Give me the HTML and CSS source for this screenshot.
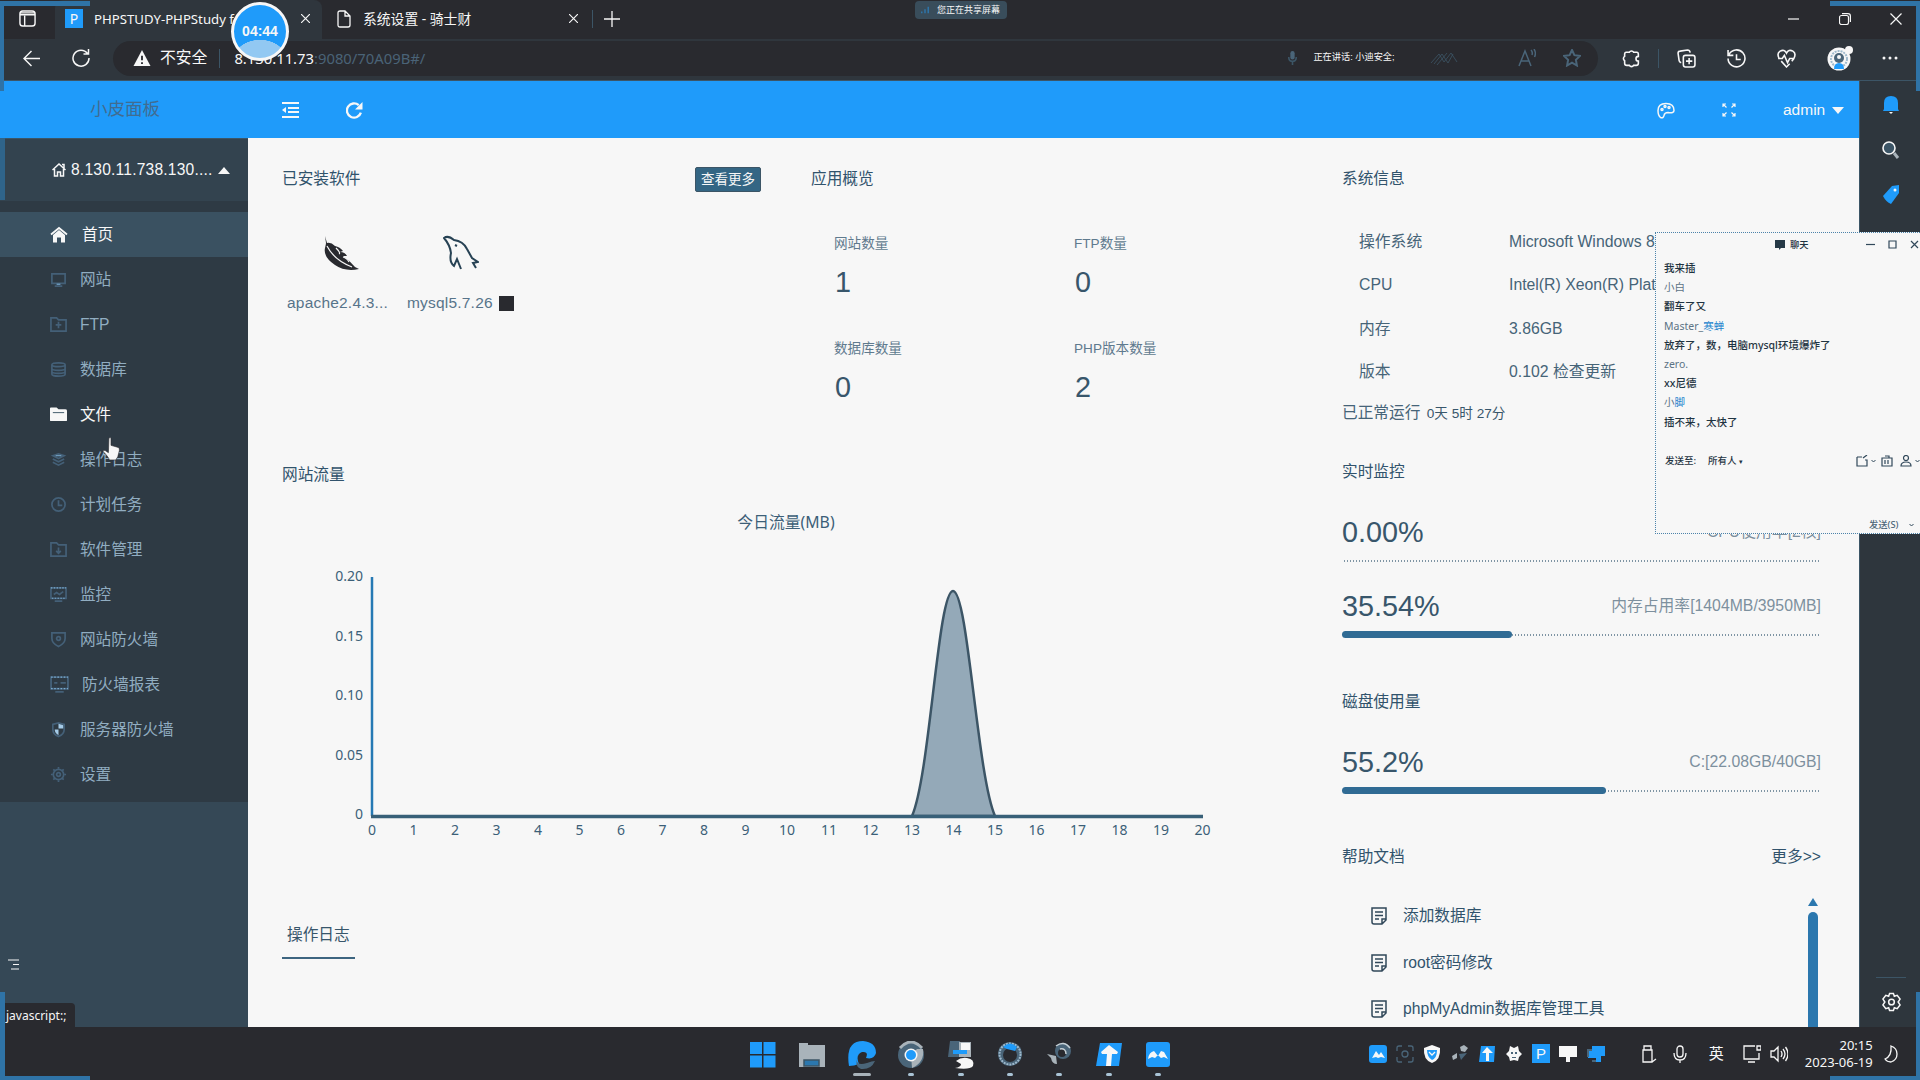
FILE: index.html
```html
<!DOCTYPE html>
<html lang="zh-CN">
<head>
<meta charset="utf-8">
<title>PHPSTUDY-PHPStudy for Windows</title>
<link rel="stylesheet" href="styles.css">
</head>
<body>
<div class="desktop">
  <header class="tabs">
    <svg class="tabs-menu" viewBox="0 0 18 18"><rect x="1" y="1" width="16" height="16" rx="3"/><path d="M1 3h16M1 5h16M6 6v11"/></svg>
    <div class="tab tab-active">
      <span class="favicon">P</span>
      <span class="tab-title">PHPSTUDY-PHPStudy for</span>
      <svg class="x" viewBox="0 0 10 10"><path d="M0 0l10 10M10 0L0 10"/></svg>
    </div>
    <div class="tab tab-second">
      <svg class="file" viewBox="0 0 14 18"><path d="M1 3q0-2 2-2h5l5 5v9q0 2-2 2H3q-2 0-2-2zM8 1v5h5"/></svg>
      <span class="tab-title">系统设置 - 骑士财</span>
      <svg class="x" viewBox="0 0 10 10"><path d="M0 0l10 10M10 0L0 10"/></svg>
    </div>
    <span class="tab-sep"></span>
    <svg class="plus" viewBox="0 0 16 16"><path d="M8 0v16M0 8h16"/></svg>
    <div class="window-buttons">
      <svg viewBox="0 0 12 12"><path d="M0 6h11"/></svg>
      <svg viewBox="0 0 12 12"><rect x=".5" y="2.5" width="9" height="9" rx="2"/><path d="M3 .7h6q2.4 0 2.4 2.4V9"/></svg>
      <svg viewBox="0 0 12 12"><path d="M.5.5l11 11M11.5.5l-11 11"/></svg>
    </div>
  </header>

  <nav class="toolbar">
    <svg class="nav-back" viewBox="0 0 18 18"><path d="M18 9H1M9 1L1 9l8 8"/></svg>
    <svg class="nav-reload" viewBox="0 0 18 18"><path d="M15.500 4.500A8 8 0 1 0 17 9M16.500 0v5h-5"/></svg>
    <div class="address">
      <svg class="warn" viewBox="0 0 18 17"><path class="fill" d="M9 0l9 17H0z"/><path class="bang" d="M9 6v5M9 13v2"/></svg>
      <span class="insecure">不安全</span>
      <span class="bar"></span>
      <span class="url">8.130.11.73<i>:9080/70A09B#/</i></span>
      <div class="speaker">
        <svg viewBox="0 0 8 13"><rect class="fill-slate" x="2" y="0" width="4" height="8" rx="2"/><path d="M.5 5.500q0 4 3.500 4t3.500-4M4 10v3"/></svg>
        <span>正在讲话: 小迪安全;</span>
        <svg class="faint" viewBox="0 0 28 16"><path d="M1 13l8-9 5 8 7-9 6 9M4 14l8-10 6 9 5-9M7 15l10-12"/></svg>
      </div>
      <svg class="aloud" viewBox="0 0 18 18"><path d="M1 17L7 2l6 15M3.500 12h7M13 1q2 2 1 5M16 0q2.500 4 .5 8"/></svg>
      <svg class="star" viewBox="0 0 18 18"><path d="M9 1l2.400 5.200 5.600.7-4.100 3.900 1 5.700L9 13.700l-4.900 2.800 1-5.700L1 6.900l5.600-.7z"/></svg>
    </div>
    <div class="tools">
      <svg viewBox="0 0 18 18"><path d="M4 3h3a2.300 2.300 0 0 1 4 0h3q1.500 0 1.500 2v2a2.200 2.200 0 1 0 0 4.500v2q0 2-2 2H11a2.300 2.300 0 0 1-4 0H4.500q-2 0-2-2V11a2.300 2.300 0 0 1 0-4V5q0-2 1.500-2z"/></svg>
      <span class="bar"></span>
      <svg viewBox="0 0 18 18"><rect x="6" y="6" width="11" height="11" rx="2"/><path d="M11.500 8.500v6M8.500 11.500h6M4 13q-2-.5-2-2L1 4q0-2 2-2l7-1q2 0 2.500 2.500"/></svg>
      <svg viewBox="0 0 18 18"><path d="M2 5a8 8 0 1 1-1 4M1 1v5h5M9 5v5h4"/></svg>
      <svg viewBox="0 0 18 18"><path d="M2 9Q-.5 4 3 2q4-2 6 2 2-4 6-2 3.500 2 1 7l-2 2.500M1 9h4l2-3 3 7 2-4h4M4 11.500l5 5.500 3-3"/></svg>
      <svg class="avatar" viewBox="0 0 26 26"><circle class="white" cx="12" cy="14" r="11.500"/><circle class="ring" cx="12" cy="14" r="8"/><circle class="slate" cx="12" cy="13" r="5"/><path d="M7 24q0-6 5-6t5 6" class="blue"/><circle class="white" cx="12" cy="12" r="2"/><circle class="white" cx="22" cy="5" r="4"/></svg>
      <svg class="more" viewBox="0 0 16 4"><circle cx="2" cy="2" r="1.500"/><circle cx="8" cy="2" r="1.500"/><circle cx="14" cy="2" r="1.500"/></svg>
    </div>
  </nav>

  <div class="viewport">
    <div class="app">
      <header class="app-header">
        <span class="brand">小皮面板</span>
        <svg class="fold" viewBox="0 0 17 16"><path d="M0 1h17M6 6h11M6 10h11M0 15h17"/><path class="white" d="M0 8l4-3v6z"/></svg>
        <svg class="refresh" viewBox="0 0 16 16"><path d="M14 10A6.700 6.700 0 1 1 12 3"/><path class="white" d="M15.500 0v7h-7z"/></svg>
        <svg class="palette" viewBox="0 0 18 16"><path d="M3.500 15q3 1 3.500-2t4-3q6 1 6-2 0-7-8-7T1 8q0 5 2.500 7z"/><circle cx="5" cy="7" r="1"/><circle cx="8" cy="4" r="1"/><circle cx="12" cy="5" r="1"/></svg>
        <svg class="expand" viewBox="0 0 14 14"><path d="M1 4V1h3M1 1l3.500 3.500M10 1h3v3M13 1L9.500 4.500M1 10v3h3M1 13l3.500-3.500M13 10v3h-3M13 13L9.500 9.500"/></svg>
        <span class="user">admin</span>
        <span class="caret-down"></span>
      </header>

      <div class="app-body">
        <aside class="side">
          <div class="host">
            <svg viewBox="0 0 14 14"><path d="M.5 7L7 1l6.500 6M2.500 6v7h3V9h3v4h3V6M10 1.500h2V5"/></svg>
            <span>8.130.11.738.130....</span>
            <i class="caret-up"></i>
          </div>
          <ul class="menu">
            <li class="current"><svg viewBox="0 0 18 16"><path class="white" d="M9 3.500L3 8.500V16h4v-5h4v5h4V8.500z"/><path d="M1 8l8-6.500L17 8"/></svg>首页</li>
            <li><svg viewBox="0 0 18 16"><path d="M2 2h14v10H2zM5 15h8"/><path class="light" d="M7 13h4"/></svg>网站</li>
            <li><svg viewBox="0 0 18 16"><path d="M1 1h6l2 2h8v12H1zM9 5v7M6 8.500h6"/></svg>FTP</li>
            <li><svg viewBox="0 0 18 16"><path d="M2 3q0-2 7-2t7 2v10q0 2-7 2t-7-2zM2 3q0 2 7 2t7-2M2 7q0 2 7 2t7-2M2 10q0 2 7 2t7-2"/></svg>数据库</li>
            <li class="hovered"><svg viewBox="0 0 18 16"><path class="white" d="M0 1.500q0-1 1-1h6l2 2h7q2 0 2 1.500v10q0 1-1 1H1q-1 0-1-1z"/><path class="cut" d="M3 6h12"/></svg>文件</li>
            <li><svg viewBox="0 0 18 16"><path d="M3 4l6-2 6 2-6 3zM3 7.500l6 3 6-3M3 11l6 3 6-3"/><path class="light" d="M6 4h6"/></svg>操作日志</li>
            <li><svg viewBox="0 0 18 16"><circle cx="9" cy="8" r="7"/><path d="M9 3.500V9h4"/></svg>计划任务</li>
            <li><svg viewBox="0 0 18 16"><path d="M1 1h6l2 2h8v12H1zM9 6v6M6.500 9.500L9 12l2.500-2.500"/></svg>软件管理</li>
            <li><svg viewBox="0 0 18 16"><path d="M1 1h16v11H1zM5 15h8M4 8l3-2 3 2 4-3"/><path class="light dots" d="M1 1h16M2 12h15"/></svg>监控</li>
            <li><svg viewBox="0 0 18 16"><path d="M2 1h14v6q0 5-7 8.500Q2 12 2 7z"/><circle cx="9" cy="7" r="2"/></svg>网站防火墙</li>
            <li class="wide"><svg viewBox="0 0 18 16"><path d="M1 1h16v11H1zM5 15h8M4 6.500h3M10 6.500h5"/><path class="light dots" d="M1 1h16M1 12h16"/></svg>防火墙报表</li>
            <li><svg viewBox="0 0 18 16"><path d="M3 2.500l6-1.500 6 1.500V8q0 5-6 7.500Q3 13 3 8z"/><path class="pale" d="M9 2l5 1.500V7H9zM9 8v6Q5 12 5 8z"/></svg>服务器防火墙</li>
            <li><svg viewBox="0 0 18 16"><circle cx="9" cy="8" r="5.500"/><circle cx="9" cy="8" r="2"/><path d="M9 0v2M9 14v2M1 8h2M15 8h2M3.500 2.500L5 4M13 12l1.500 1.500M14.500 2.500L13 4M5 12l-1.500 1.500"/></svg>设置</li>
          </ul>
          <svg class="side-toggle" viewBox="0 0 12 11"><path d="M0 1h11M5 5.500h6M3 10h8"/></svg>
        </aside>

        <main class="content">
          <div class="left">
            <div class="top-row">
              <section class="installed">
                <h2>已安装软件 <button>查看更多</button></h2>
                <div class="apps">
                  <figure>
                    <svg viewBox="0 0 36 36"><path class="ink" d="M2 1l2 7q4-1 8 3 5 1 8 5l-3 1q5 0 7 4l-4 0q6 4 12 11l4 2q-14 3-24-4Q0 22 2 13q1-4 1-5z"/><path class="vein" d="M4 11q7 14 25 21M13 13q5 5 3 6M20 22q4 1 6 5"/></svg>
                    <figcaption>apache2.4.3...</figcaption>
                  </figure>
                  <figure>
                    <svg viewBox="0 0 36 36"><path class="line" d="M18 34l-4-10-3 7q-5-4-3-13Q7 10 1 3q4-3 10 2 9 1 13 9l5 9 6 4-5 1 3 5M12 10l2 1"/></svg>
                    <figcaption>mysql5.7.26<i></i></figcaption>
                  </figure>
                </div>
              </section>
              <section class="overview">
                <h2>应用概览</h2>
                <dl>
                  <div><dt>网站数量</dt><dd>1</dd></div>
                  <div><dt>FTP数量</dt><dd>0</dd></div>
                  <div><dt>数据库数量</dt><dd>0</dd></div>
                  <div><dt>PHP版本数量</dt><dd>2</dd></div>
                </dl>
              </section>
            </div>
            <section class="traffic">
              <h2>网站流量</h2>
              <svg viewBox="282 514 978 366">
                <text class="chart-title" x="786" y="528">今日流量(MB)</text>
                <g class="y-labels">
                  <text x="363" y="581">0.20</text><text x="363" y="641">0.15</text><text x="363" y="700">0.10</text><text x="363" y="760">0.05</text><text x="363" y="819">0</text>
                </g>
                <path class="area" d="M912 816C930 775 938 591 953 591S977 775 995 816z"/>
                <path class="y-axis" d="M372 577V816"/>
                <path class="x-axis" d="M371 816.500H1203"/>
                <g class="x-labels">
                  <text x="372" y="835">0</text><text x="413.500" y="835">1</text><text x="455" y="835">2</text><text x="496.500" y="835">3</text><text x="538" y="835">4</text><text x="579.500" y="835">5</text><text x="621" y="835">6</text><text x="662.500" y="835">7</text><text x="704" y="835">8</text><text x="745.500" y="835">9</text><text x="787" y="835">10</text><text x="829" y="835">11</text><text x="870.500" y="835">12</text><text x="912" y="835">13</text><text x="953.500" y="835">14</text><text x="995" y="835">15</text><text x="1036.500" y="835">16</text><text x="1078" y="835">17</text><text x="1119.500" y="835">18</text><text x="1161" y="835">19</text><text x="1202.500" y="835">20</text>
                </g>
              </svg>
            </section>
            <div class="log-tab">操作日志</div>
          </div>

          <div class="right">
            <h2>系统信息</h2>
            <dl class="info">
              <dt>操作系统</dt><dd>Microsoft Windows 8</dd>
              <dt>CPU</dt><dd>Intel(R) Xeon(R) Plat</dd>
              <dt>内存</dt><dd>3.86GB</dd>
              <dt>版本</dt><dd>0.102 检查更新</dd>
            </dl>
            <p class="uptime">已正常运行 <small>0天 5时 27分</small></p>
            <h2 class="live">实时监控</h2>
            <div class="metric"><strong>0.00%</strong><span>CPU使用率[2核]</span></div>
            <div class="track"></div>
            <div class="metric second"><strong>35.54%</strong><span>内存占用率[1404MB/3950MB]</span></div>
            <div class="track"><b style="width:35.54%"></b></div>
            <h2 class="disk">磁盘使用量</h2>
            <div class="metric"><strong>55.2%</strong><span>C:[22.08GB/40GB]</span></div>
            <div class="track"><b style="width:55.2%"></b></div>
            <h2 class="help">帮助文档 <a>更多&gt;&gt;</a></h2>
            <div class="docs">
              <ul>
                <li><svg viewBox="0 0 17 18"><path d="M1 1h14v12l-4 4H3q-2 0-2-2zM15 12h-4v5M4 5h8M4 8.500h8M4 12h4"/></svg>添加数据库</li>
                <li><svg viewBox="0 0 17 18"><path d="M1 1h14v12l-4 4H3q-2 0-2-2zM15 12h-4v5M4 5h8M4 8.500h8M4 12h4"/></svg>root密码修改</li>
                <li><svg viewBox="0 0 17 18"><path d="M1 1h14v12l-4 4H3q-2 0-2-2zM15 12h-4v5M4 5h8M4 8.500h8M4 12h4"/></svg>phpMyAdmin数据库管理工具</li>
              </ul>
              <div class="scroll"><i></i><b></b></div>
            </div>
          </div>
        </main>
      </div>
    </div>

    <aside class="edge">
      <svg viewBox="0 0 18 20"><path class="blue" d="M2 14V8q0-7 7-7t7 7v6l1 2H1z"/><path class="white" d="M7 17h4l-2 2z"/></svg>
      <svg viewBox="0 0 18 20"><circle class="lens" cx="7" cy="8" r="6"/><path class="handle" d="M12 13l4 5"/></svg>
      <svg viewBox="0 0 18 20"><path class="blue" d="M1 11L10 1l7-1v8L9 19q-5-2-8-8z"/><circle class="white" cx="13" cy="5" r="1.500"/></svg>
      <hr>
      <svg class="gear" viewBox="0 0 20 20"><path d="M8 1h4l1 3 3-1 3 4-2 3 2 3-3 4-3-1-1 3H8l-1-3-3 1-3-4 2-3-2-3 3-4 3 1z"/><circle cx="10" cy="10" r="3"/></svg>
    </aside>
  </div>

  <footer class="taskbar">
    <div class="pinned">
      <svg viewBox="0 0 28 36"><path class="blue" d="M1 1h12v12H1zM14.500 1h12v12h-12zM1 14.500h12v12H1zM14.500 14.500h12v12h-12z"/></svg>
      <svg viewBox="0 0 28 36"><path class="grey" d="M1 2h9v2h17v22H1z"/><path class="folder-slot" d="M6 19h15v6H6z"/></svg>
      <svg viewBox="0 0 28 36"><path class="blue" d="M1 25Q-3 0 15 0q13 1 13 12-2 7-10 5 3-7-4-6-7 3-3 12-5 2-10 2z"/><path class="slate" d="M11 12q-7 14 8 10 5-2 8-2-4 9-14 8-8-3-2-16z"/><rect class="grey" x="5" y="32" width="18" height="3" rx="1.500"/></svg>
      <svg viewBox="0 0 28 36"><circle class="slate" cx="14" cy="14" r="13"/><path class="grey" d="M14 14l6-6h6q2 13-11 19z"/><path class="chrome-top" d="M3 7q11-12 22 0"/><circle class="white" cx="14" cy="14" r="6.500"/><circle class="blue" cx="14" cy="14" r="5"/><rect class="dot" x="11" y="32" width="6" height="3" rx="1.500"/></svg>
      <svg viewBox="0 0 28 36"><path class="slate" d="M3 0h10v16H1z"/><path class="grey" d="M12 1h12v15H12z"/><path class="white" d="M14 2h9v7h-9zM9 20q5-4 11-3 8 1 6 8-3 4-18 2 6-1 6-4z"/><path class="blue" d="M6 9h14v4H6z"/><rect class="dot" x="11" y="32" width="6" height="3" rx="1.500"/></svg>
      <svg viewBox="0 0 28 36"><circle class="slate" cx="14" cy="13" r="12"/><circle class="ink" cx="14" cy="14" r="7"/><circle class="ring" cx="14" cy="13" r="10.500"/><path class="blue" d="M7 6q7-7 14 0l-2 4-8-2z"/><rect class="dot" x="11" y="32" width="6" height="3" rx="1.500"/></svg>
      <svg viewBox="0 0 28 36"><circle class="slate" cx="18" cy="10" r="8"/><circle class="ink" cx="17" cy="12" r="4"/><path class="grey" d="M2 13l9 2 1 8q-5 0-6-6z"/><path class="arc" d="M11 5q8-6 14 2M15 8q6-1 6 5"/><rect class="dot" x="11" y="32" width="6" height="3" rx="1.500"/></svg>
      <svg viewBox="0 0 28 36"><path class="blue" d="M5 2h22l-3 23H1z"/><path class="white" d="M14 4l9 7-1 2h-5l-1 12h-5l1-12H7l-1-2z"/><rect class="dot" x="11" y="32" width="6" height="3" rx="1.500"/></svg>
      <svg viewBox="0 0 28 36"><rect class="blue" x="2" y="1" width="24" height="25" rx="3"/><path class="white" d="M4 18q1-7 6-8l4 5 3-5 3 1 4 7-4-2-3 1-3-3-3 3-3-1z"/><rect class="dot" x="11" y="32" width="6" height="3" rx="1.500"/></svg>
    </div>
    <div class="tray">
      <svg viewBox="0 0 18 18"><rect class="blue" width="18" height="18" rx="3"/><path class="white" d="M3 13l4-7 3 4 2-3 4 6-4-1-3 1-2-1z"/></svg>
      <svg class="dim" viewBox="0 0 18 18"><path d="M1 6V3q0-2 2-2h3M12 1h3q2 0 2 2v3M17 12v3q0 2-2 2h-3M6 17H3q-2 0-2-2v-3"/><circle cx="9" cy="9" r="3"/></svg>
      <svg viewBox="0 0 18 18"><path class="white" d="M1 3l8-3 8 3q1 12-8 15Q0 15 1 3z"/><path class="blue" d="M4 5h10q0 8-5 10-5-3-5-10z"/><path class="tick" d="M6 7l3 3 3-3"/></svg>
      <svg viewBox="0 0 18 18"><path class="grey" d="M9 2l4-2 4 3-3 4-4-1zM1 11l5-3v5l-4 2z"/><path class="slate" d="M8 9l8-1-6 7z"/></svg>
      <svg viewBox="0 0 18 18"><path class="blue" d="M3 1h14l-1 16H1z"/><path class="white" d="M9 2l6 6h-4v8H8V8H4z"/></svg>
      <svg viewBox="0 0 18 18"><path class="white" d="M5 1l4 2 4-2 1 5 3 3-3 3-1 4-4-1-4 1-1-4-3-3 3-3z"/><path class="slate" d="M6 7h2v2H6zM10 7h2v2h-2zM7 12h4v1H7z"/></svg>
      <span class="p-badge">P</span>
      <svg viewBox="0 0 18 18"><path class="white" d="M0 1h18v11H0zM7 12h4v5H7z"/></svg>
      <svg viewBox="0 0 18 18"><path class="blue" d="M5 1h13v10h-4v6H9v-4H1V6h4z"/><path class="slate" d="M0 4h5v2H2v6H0zM5 15h4v2H5z"/></svg>
      <svg class="usb" viewBox="0 0 18 18"><path d="M4 5h9v12H4zM5 5V1h7v4M13 17l4-3"/></svg>
      <svg class="mic" viewBox="0 0 18 18"><rect x="6" y="1" width="6" height="11" rx="3"/><path d="M3 8q0 7 6 7t6-7M9 15v3"/></svg>
      <span class="ime">英</span>
      <svg class="net" viewBox="0 0 18 18"><path d="M12 1H1v13h15V8M5 17h7M14 1h4v4h-4z"/></svg>
      <svg class="sound" viewBox="0 0 18 18"><path d="M1 6h3l4-4v14l-4-4H1zM11 6q2 3 0 6M13 4q4 5 0 10M15.500 2q5 7 0 14"/></svg>
      <time><span>20:15</span><span>2023-06-19</span></time>
      <svg class="moon" viewBox="0 0 16 18"><path d="M8 1q6 2 6 8t-6 8q-4 0-6-3 7-3 6-13z"/></svg>
    </div>
  </footer>

  <div class="timer">04:44</div>
  <div class="sharing"><svg viewBox="0 0 10 10"><path d="M1 9V7M5 9V4M9 9V1"/></svg>您正在共享屏幕</div>
  <div class="status">javascript:;</div>
  <svg class="cursor" viewBox="0 0 17 23"><path d="M6.500 1q1.500-1 2 0v7l7 2q1.500 1 1 3l-1.500 6-2 3H7q-1-3-6-8 0-2 2-1l3 2z"/></svg>

  <section class="chat">
    <header>
      <svg class="bubble" viewBox="0 0 10 10"><path d="M0 0h10v8H6L4 10V8H0z"/></svg><span>聊天</span>
      <div class="chat-buttons">
        <svg viewBox="0 0 9 9"><path d="M0 4.500h9"/></svg>
        <svg viewBox="0 0 9 9"><path d="M1 1h7v7H1z"/></svg>
        <svg viewBox="0 0 9 9"><path d="M1 1l7 7M8 1L1 8"/></svg>
      </div>
    </header>
    <ol>
      <li>我来插</li><li class="who">小白</li>
      <li>翻车了又</li><li class="who">Master_<em>寒蝉</em></li>
      <li>放弃了，数，电脑mysql环境爆炸了</li><li class="who">zero.</li>
      <li>xx尼德</li><li class="who">小<em>脚</em></li>
      <li>插不来，太快了</li>
    </ol>
    <div class="to"><span>发送至:</span><span class="all">所有人 <small>▾</small></span>
      <div class="chat-tools">
        <svg viewBox="0 0 12 12"><path d="M1 2h5M9 5h2v6H1V2M7 3l4-3"/></svg><svg class="chevron" viewBox="0 0 5 4"><path d="M.5 1l2 2 2-2"/></svg>
        <svg class="shot" viewBox="0 0 12 12"><path d="M1 3h10v8H1zM4 1h4v2M4 5v4M7 5v4"/></svg>
        <svg viewBox="0 0 12 12"><circle cx="6" cy="3" r="2.500"/><path d="M1 11q0-4 5-4t5 4z"/></svg><svg class="chevron" viewBox="0 0 5 4"><path d="M.5 1l2 2 2-2"/></svg>
      </div>
    </div>
    <footer>发送(S)<svg class="chevron" viewBox="0 0 5 4"><path d="M.5 1l2 2 2-2"/></svg></footer>
  </section>

  <i class="corner tl"></i><i class="corner tr"></i><i class="corner bl"></i><i class="corner br"></i>
  <i class="host-edge"></i>
</div>
</body>
</html>
```
FILE: styles.css
```css
:root {
  --ink: #292a2f;
  --slate: #3c5566;
  --blue: #1f9bfa;
  --paper: #f7f7f7;
  --chrome: #2f363d;
  --text: #38566b;
}

* { box-sizing: border-box; margin: 0; padding: 0; }

body {
  width: 1920px;
  height: 1080px;
  overflow: hidden;
  background: var(--ink);
  color: var(--text);
  font: 16px/1 "Liberation Sans", "Noto Sans CJK SC", sans-serif;
}

i, em { font-style: normal; }
ul, ol { list-style: none; }
svg { display: block; flex: none; fill: none; stroke: var(--paper); stroke-width: 1.500; }
.white { fill: var(--paper); stroke: none; }
.blue { fill: var(--blue); stroke: none; }
.slate, .fill-slate { fill: #4a6579; stroke: none; }
.grey { fill: #a9b3ba; stroke: none; }

.desktop {
  position: relative;
  display: flex;
  flex-direction: column;
  width: 1920px;
  height: 1080px;
  overflow: hidden;
}

/* Browser tabs */
.tabs { display: flex; align-items: center; height: 39px; padding: 0 0 2px 19px; color: var(--paper); }
.tabs-menu { width: 17px; height: 17px; margin-right: 19px; }
.tab { display: flex; align-items: center; height: 37px; font: 14px/1 "Noto Sans", "Noto Sans CJK SC", sans-serif; white-space: nowrap; }
.tab-active { align-self: flex-start; width: 267px; height: 39px; padding: 0 0 2px 10px; background: var(--chrome); border-radius: 8px 8px 0 0; }
.tab-active .tab-title { width: 206px; margin-left: 11px; font-size: 13.200px; line-height: 20px; }
.favicon { width: 18px; height: 19px; background: var(--blue); text-align: center; line-height: 19px; }
.x { width: 9px; height: 9px; margin-left: 1px; stroke-width: 1.300; }
.tab-second { width: 270px; padding-left: 15px; }
.tab-second .tab-title { width: 205px; margin-left: 12px; font-size: 13.800px; line-height: 20px; }
.file { width: 14px; height: 18px; stroke-width: 1.300; }
.tab-sep { width: 1px; height: 18px; background: var(--slate); }
.plus { width: 16px; height: 16px; margin-left: 11px; stroke-width: 1.300; }
.window-buttons { display: flex; gap: 39px; margin-left: auto; margin-right: 18px; }
.window-buttons svg { width: 12px; height: 12px; stroke-width: 1.200; }

/* Navigation bar */
.toolbar { display: flex; align-items: center; height: 42px; padding: 0 22px 3px 23px; background: var(--chrome); border-bottom: 1px solid var(--slate); }
.nav-back { width: 17px; height: 17px; }
.nav-reload { width: 18px; height: 18px; margin: 0 23px 0 32px; }
.address { display: flex; align-items: center; width: 1489px; height: 35px; padding-left: 20px; border-radius: 18px; background: var(--ink); color: var(--paper); }
.warn { width: 18px; height: 16px; }
.warn .fill { fill: var(--paper); stroke: none; }
.warn .bang { stroke: var(--ink); stroke-width: 2; }
.insecure { margin-left: 9px; font-size: 15.800px; }
.bar { width: 1px; height: 19px; background: var(--slate); }
.address .bar { margin: 0 14px 0 12px; }
.url { font: 14.800px/20px "Noto Sans", sans-serif; width: 1054px; }
.url i { color: #4a6377; }
.speaker { display: flex; align-items: center; width: 230px; font-size: 9.200px; white-space: nowrap; }
.speaker svg { width: 9px; height: 14px; stroke: var(--slate); margin-right: 16px; }
.speaker .faint { width: 28px; height: 18px; margin: 0 0 0 35px; stroke-width: .8; }
.aloud, .star { width: 18px; height: 18px; stroke: #4a6579; }
.star { margin-left: 27px; stroke-width: 2; }
.tools { display: flex; align-items: center; margin-left: 24px; }
.tools svg { width: 19px; height: 19px; }
.tools .bar { margin: 0 18px 0 17px; }
.tools .bar ~ svg { margin-right: 31px; }
.tools .bar ~ .avatar { width: 26px; height: 26px; margin-right: 29px; }
.tools .bar ~ .more { width: 16px; height: 4px; margin: 0; fill: var(--paper); stroke: none; }

/* Panel frame */
.viewport { display: flex; height: 946px; }
.app { display: flex; flex-direction: column; width: 1859px; }
.app-header { display: flex; align-items: center; height: 57px; padding: 1px 0 0 90px; background: var(--blue); color: var(--paper); }
.brand { width: 192px; color: #416c91; font-size: 17.500px; }
.fold { width: 17px; height: 16px; stroke-width: 2; }
.refresh { width: 17px; height: 17px; margin-left: 47px; stroke-width: 2.200; }
.palette { width: 18px; height: 17px; margin-left: 1294px; }
.expand { width: 14px; height: 14px; margin: 0 47px; stroke-width: 1.200; }
.user { width: 49px; font-size: 15.500px; }
.caret-down { border: 6.500px solid transparent; border-top: 7px solid var(--paper); border-bottom: 0; }
.app-body { display: flex; height: 889px; }

.side { width: 248px; background: #354856; border-top: 1px solid var(--slate); color: #bdc9d1; }
.host { display: flex; align-items: center; height: 62px; padding-left: 52px; background: #33434f; color: var(--paper); }
.host svg { width: 14px; height: 14px; margin-right: 5px; }
.host span { width: 147px; font-size: 15.600px; letter-spacing: .2px; }
.caret-up { border: 6px solid transparent; border-top: 0; border-bottom: 7px solid var(--paper); }
.menu { height: 601px; padding-top: 11px; background: #2e3a44; }
.menu li { display: flex; align-items: center; height: 45px; padding-left: 50px; font: 15.600px/1 "Liberation Sans", "Noto Sans CJK SC", sans-serif; color: #91adc1; }
.menu svg { width: 17px; height: 17px; margin-right: 13px; stroke: #446078; stroke-width: 1.800; }
.menu .wide svg { width: 19px; }
.menu .current { background: #3a5161; color: var(--paper); }
.menu .current svg { width: 18px; margin-right: 14px; stroke: var(--paper); }
.menu .hovered { color: var(--paper); }
.menu .cut { stroke: var(--slate); stroke-width: 1; }
.menu .light { stroke: #7aabd0; stroke-width: 1.200; }
.menu .dots { stroke-dasharray: 1.500 1.500; }
.menu .pale { fill: #a5cbe8; stroke: none; }
.side-toggle { width: 12px; height: 11px; margin: 157px 0 0 8px; stroke-width: 1; }

/* Dashboard */
.content { display: flex; width: 1611px; padding: 0 38px 0 34px; background: var(--paper); overflow: hidden; }
h2 { display: flex; align-items: center; height: 80px; padding-top: 2px; font-size: 15.700px; font-weight: 400; color: #31536c; }
.left { width: 1060px; }
.top-row { display: flex; height: 296px; }
.installed { width: 529px; }
button { flex: none; width: 66px; height: 25px; margin-left: auto; margin-right: 50px; border: 1px solid var(--slate); border-radius: 2px; background: #346684; color: var(--paper); font: 13.500px/1 "Noto Sans CJK SC", sans-serif; }
.apps { display: flex; padding: 17px 0 0 5px; }
figure { width: 120px; }
figure svg { width: 36px; height: 36px; margin-left: 36px; }
figcaption { display: flex; align-items: center; height: 24px; margin-top: 20px; font-size: 15.500px; color: #57748a; white-space: nowrap; letter-spacing: .2px; }
figcaption i { width: 15px; height: 15px; margin-left: 6px; background: var(--ink); }
.ink { fill: var(--ink); stroke: none; }
.vein { stroke: var(--paper); stroke-width: 1.200; }
.line { stroke: #274254; stroke-width: 2; }
.overview { width: 531px; }
.overview dl { display: grid; grid-template-columns: 240px 240px; grid-auto-rows: 105px; padding: 18px 0 0 23px; }
.overview dt { height: 16px; font-size: 13.600px; line-height: 16px; color: #5f7a8e; }
.overview dd { margin: 16px 0 0 1px; font-size: 28.800px; }
.traffic svg { width: 978px; height: 366px; stroke: none; overflow: visible; }
.traffic text { fill: #3c5f78; font: 14px "Noto Sans", "Noto Sans CJK SC", sans-serif; text-anchor: middle; }
.traffic .chart-title { font-size: 15.800px; }
.traffic .y-labels text { text-anchor: end; }
.area { fill: #94a9b8; stroke: var(--slate); stroke-width: 2.500; }
.y-axis { stroke: #2679b4; stroke-width: 2.500; }
.x-axis { stroke: #386078; stroke-width: 3.500; }
.log-tab { display: flex; align-items: center; width: 73px; height: 48px; margin-top: 31px; padding: 2px 0 0 5px; border-bottom: 2px solid #3d6580; font-size: 15.700px; white-space: nowrap; }

.right { width: 479px; }
.info { display: grid; grid-template-columns: 150px 312px; grid-auto-rows: 43.500px; align-items: center; padding: 2px 0 0 17px; color: #466478; font-size: 15.800px; white-space: nowrap; }
.info dd { line-height: 20px; }
.uptime { height: 38px; line-height: 38px; color: #466478; font-size: 15.700px; }
.uptime small { margin-left: 2px; font-size: 13.600px; color: #38566b; }
.live { height: 78px; padding-top: 1px; }
.metric { display: flex; align-items: center; justify-content: space-between; height: 44px; }
.metric strong { font-size: 28.800px; font-weight: 400; }
.metric span { color: #7d909e; font-size: 15.800px; }
.metric.second { margin-top: 17px; }
.track { display: flex; align-items: center; height: 13px; background: repeating-linear-gradient(90deg, #7f95a4 0 1px, transparent 1px 3px) center / 475px 2px no-repeat; }
.track b { height: 7px; border-radius: 4px; background: #306b94; }
.disk { margin-top: 20px; height: 79px; }
.help { justify-content: space-between; height: 74px; margin-top: 22px; }
.docs { display: flex; justify-content: space-between; height: 137px; padding-right: 3px; overflow: hidden; }
.docs li { display: flex; align-items: center; height: 46.500px; padding-left: 29px; color: #31536c; font: 15.700px/20px "Liberation Sans", "Noto Sans CJK SC", sans-serif; }
.docs li svg { width: 17px; height: 18px; margin-right: 15px; stroke: #31485a; }
.scroll { width: 10px; padding-top: 5px; }
.scroll i { display: block; border: 5px solid transparent; border-top: 0; border-bottom: 8px solid #2b77ae; }
.scroll b { display: block; height: 135px; margin-top: 6px; border-radius: 5px; background: #2b77ae; }

/* Browser side strip */
.edge { display: flex; flex-direction: column; align-items: center; width: 61px; padding: 14px 0 15px 2px; border-left: 1px solid var(--slate); background: #2e363d; }
.edge svg { width: 18px; height: 20px; margin-bottom: 25px; stroke-width: 1.600; }
.edge .lens { fill: var(--slate); }
.edge .handle { stroke: #a9b3ba; stroke-width: 3; }
.edge hr { width: 30px; margin-top: auto; border: 0; border-top: 1px solid var(--slate); }
.edge .gear { width: 19px; height: 20px; margin: 14px 0 0; }

/* Taskbar */
.taskbar { display: flex; height: 53px; color: var(--paper); }
.pinned { display: flex; gap: 21.400px; width: 1191px; padding: 14px 0 0 749px; }
.pinned svg { width: 28px; height: 36px; }
.folder-slot { fill: #2b77ae; stroke: var(--slate); }
.chrome-top { stroke: #a9b3ba; stroke-width: 3; }
.ring { stroke: #9eb9cc; stroke-dasharray: 2 1; stroke-width: 2; }
.arc { stroke: #c6d0d6; }
.dot { fill: #a9c3d5; stroke: none; }
.tray { display: flex; align-items: center; margin-left: 178px; width: 532px; }
.tray svg { width: 18px; height: 18px; margin-right: 9.200px; stroke-width: 1.300; }
.tray .dim { stroke: #4a6579; }
.tray .tick { stroke: var(--paper); }
.p-badge { width: 18px; height: 19px; margin-right: 9.200px; background: var(--blue); text-align: center; line-height: 19px; font-size: 15px; }
.tray .usb { margin-left: 25px; margin-right: 14px; }
.tray .mic { margin-right: 20px; }
.ime { margin-right: 19px; font-size: 15px; }
.tray .net { margin-right: 9px; }
.tray .sound { margin-right: 9px; }
.tray time { display: flex; flex-direction: column; align-items: flex-end; width: 76px; font: 13px/17px "Noto Sans", sans-serif; }
.tray .moon { width: 16px; margin: 0 0 0 10px; }

/* Floating layers */
.timer { position: absolute; left: 231px; top: 2px; width: 58px; height: 59px; border: 3px solid var(--paper); border-radius: 50%; background: radial-gradient(ellipse 27px 21px at 50% 105%, #92c8f2 98%, transparent), var(--blue); color: var(--paper); text-align: center; font: 600 14px/53px "Liberation Sans", sans-serif; }
.sharing { position: absolute; left: 915px; top: 1px; display: flex; align-items: center; gap: 8px; width: 92px; height: 18px; padding-left: 6px; border-radius: 4px; background: #394d5b; color: var(--paper); font-size: 9px; white-space: nowrap; }
.sharing svg { width: 8px; height: 8px; stroke: #2b7fbd; }
.status { position: absolute; left: 0; top: 1003px; width: 75px; height: 24px; padding-left: 6px; border-radius: 0 4px 0 0; background: var(--ink); color: var(--paper); font: 12px/25px "Noto Sans", sans-serif; white-space: nowrap; }
.cursor { position: absolute; left: 102px; top: 437px; width: 18px; height: 24px; fill: var(--paper); stroke: var(--ink); stroke-width: .6; }

.chat { position: absolute; left: 1655px; top: 232px; width: 265px; height: 302px; overflow: hidden; border: 1px dotted #4c83aa; border-right: 0; background: var(--paper); color: #1f3442; font: 500 10.500px/1 "Noto Sans", "Noto Sans CJK SC", sans-serif; }
.chat svg { stroke: #31485a; stroke-width: 1.200; }
.chat header { display: flex; align-items: center; height: 23px; padding-left: 119px; font-size: 9.300px; }
.chat header .bubble { width: 10px; height: 10px; margin-right: 5px; fill: #263946; stroke: none; }
.chat-buttons { display: flex; gap: 13px; margin-left: 57px; }
.chat-buttons svg { width: 9px; height: 9px; }
.chat ol { height: 185px; padding: 3px 0 0 8px; }
.chat li { height: 19.200px; line-height: 19.200px; white-space: nowrap; }
.chat .who { color: #5c7385; font-weight: 400; }
.chat em { color: #2383cd; }
.to { display: flex; align-items: center; height: 40px; padding-left: 9px; font-size: 9.500px; }
.all { margin-left: 12px; }
.all small { font-size: 7px; }
.chat-tools { display: flex; align-items: center; margin-left: auto; }
.chat-tools svg { width: 12px; height: 12px; }
.chat .chevron { width: 5px; height: 4px; margin: 0 0 0 3px; stroke-width: 1; }
.chat-tools .shot { margin: 0 7px 0 5px; }
.chat footer { display: flex; align-items: center; height: 54px; padding: 33px 0 0 213px; font-size: 9.300px; color: #4c6578; white-space: nowrap; }
.chat footer .chevron { margin-left: 10px; }

.corner { position: absolute; width: 90px; height: 90px; border: 0 solid #2f73a6; }
.tl { left: 0; top: 1px; border-width: 5px 0 0 4px; }
.tr { right: 0; top: 1px; border-width: 5px 4px 0 0; }
.bl { left: 0; bottom: 0; height: 88px; border-width: 0 0 4px 5px; }
.br { right: 0; bottom: 0; height: 88px; border-width: 0 4px 4px 0; }
.host-edge { position: absolute; left: 0; top: 138px; width: 5px; height: 62px; background: #2f648a; }
```
